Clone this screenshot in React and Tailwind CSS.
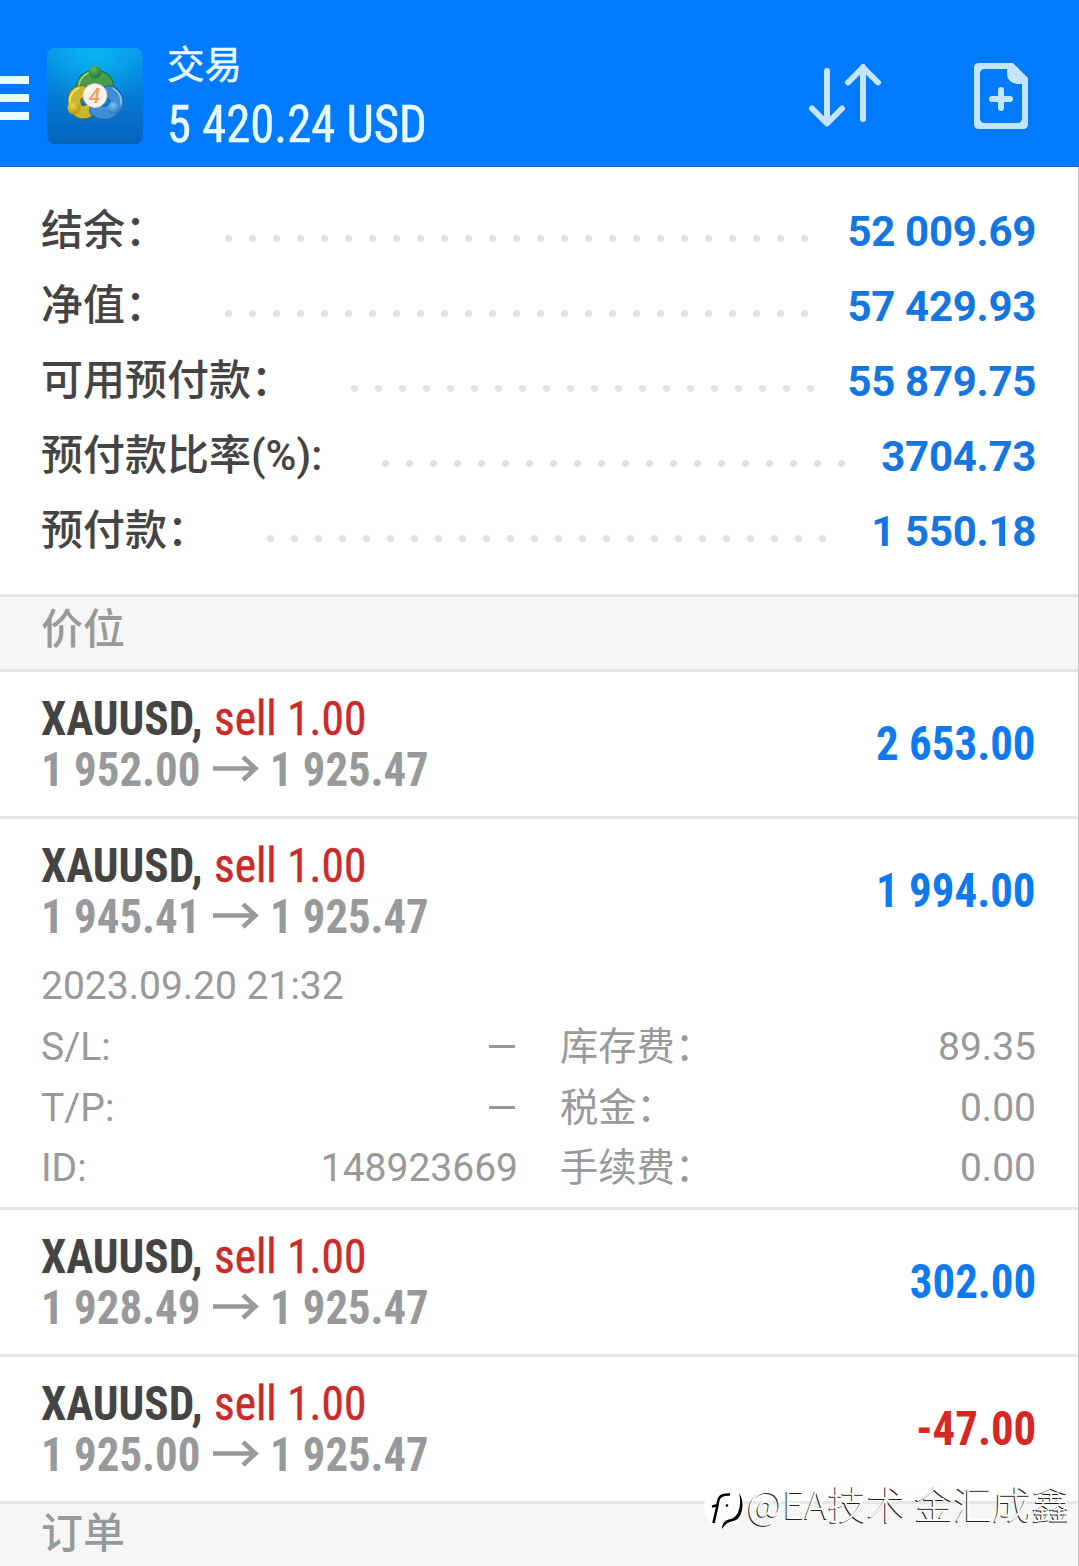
const summary = [
  { label: '结余：', width: 'w-[184px]', dots: 25, value: '52 009.69' },
  { label: '净值：', width: 'w-[184px]', dots: 25, value: '57 429.93' },
  { label: '可用预付款：', width: 'w-[310px]', dots: 20, value: '55 879.75' },
  { label: '预付款比率(%):', width: 'w-[341px]', dots: 20, value: '3704.73' },
  { label: '预付款：', width: 'w-[226px]', dots: 24, value: '1 550.18' },
];

const positions = [
  { open: '1 952.00', profit: '2 653.00' },
  {
    open: '1 945.41',
    profit: '1 994.00',
    time: '2023.09.20 21:32',
    details: [
      ['S/L:', '–', '库存费：', '89.35'],
      ['T/P:', '–', '税金：', '0.00'],
      ['ID:', '148923669', '手续费：', '0.00'],
    ],
  },
  { open: '1 928.49', profit: '302.00' },
  { open: '1 925.00', profit: '-47.00', loss: true },
];

function AppLogo() {
  return (
    <svg className="h-24 w-24 shrink-0" viewBox="0 0 96 96">
      <defs>
        <linearGradient id="bg" x1="0" y1="0" x2="0" y2="1">
          <stop offset="0" stopColor="#0a9ae8" />
          <stop offset="0.5" stopColor="#057cd6" />
          <stop offset="1" stopColor="#0562bc" />
        </linearGradient>
        <radialGradient id="glow" cx="0.5" cy="0.05" r="0.55">
          <stop offset="0" stopColor="#08bcf6" stopOpacity="0.8" />
          <stop offset="1" stopColor="#08bcf6" stopOpacity="0" />
        </radialGradient>
        <radialGradient id="green" cx="0.4" cy="0.3" r="0.7">
          <stop offset="0" stopColor="#62b866" />
          <stop offset="1" stopColor="#1b7a33" />
        </radialGradient>
        <radialGradient id="yellow" cx="0.4" cy="0.3" r="0.7">
          <stop offset="0" stopColor="#ead83c" />
          <stop offset="1" stopColor="#b09416" />
        </radialGradient>
        <radialGradient id="sky" cx="0.4" cy="0.3" r="0.7">
          <stop offset="0" stopColor="#7cc2f4" />
          <stop offset="1" stopColor="#1f74c4" />
        </radialGradient>
      </defs>
      <rect width="96" height="96" rx="8" fill="url(#bg)" />
      <rect width="96" height="96" rx="8" fill="url(#glow)" />
      <g fill="none" strokeLinecap="round">
        <path d="M36 44 C34 33 40 29 48 29 C57 29 62 34 60 45" stroke="#24683a" strokeWidth="14" />
        <path d="M36 44 C34 33 40 29 48 29 C57 29 62 34 60 45" stroke="#4a9e4a" strokeWidth="12" />
        <path d="M32 42 C31 33 36 26 44 24" stroke="#9ad08a" strokeWidth="1.5" />
        <path d="M35 44 C28 44 26 51 28 58 C31 65 37 66 43 62" stroke="#6a6c20" strokeWidth="14" />
        <path d="M35 44 C28 44 26 51 28 58 C31 65 37 66 43 62" stroke="#c9b72e" strokeWidth="12" />
        <path d="M32 40 C26 42 22 49 23 54" stroke="#efe682" strokeWidth="1.5" />
        <path d="M62 44 C69 47 71 53 69 58 C65 65 56 67 49 62" stroke="#1a5fa6" strokeWidth="14" />
        <path d="M62 44 C69 47 71 53 69 58 C65 65 56 67 49 62" stroke="#3f8fd6" strokeWidth="12" />
        <path d="M66 40 C72 44 75 50 74 56" stroke="#91cdf7" strokeWidth="1.5" />
      </g>
      <circle cx="48" cy="24" r="6.5" fill="url(#green)" />
      <circle cx="27" cy="60" r="6.5" fill="url(#yellow)" />
      <circle cx="67" cy="60" r="6.5" fill="url(#sky)" />
      <circle cx="48" cy="47.500" r="12" fill="#faf4f0" stroke="#cfc9b8" strokeWidth="0.8" />
      <text x="47.500" y="55" textAnchor="middle" fontFamily="Roboto" fontStyle="italic" fontWeight="500" fontSize="21" fill="#f2a060">4</text>
    </svg>
  );
}

function Header() {
  return (
    <header className="flex h-[167px] w-[1079px] items-center border-b border-[#1668c4] bg-[#007aff] pt-[25px]">
      <div className="mt-1 flex w-[29px] flex-col gap-2.5">
        <span className="h-2 bg-[#e8fbff]" />
        <span className="h-2 bg-[#e8fbff]" />
        <span className="h-2 bg-[#e8fbff]" />
      </div>
      <div className="ml-[18px]"><AppLogo /></div>
      <div className="ml-6 text-[#e8fbff] [-webkit-text-stroke:0.5px_#e8fbff]">
        <div className="font-['Roboto','Noto_Sans_CJK_SC',sans-serif] text-[37.5px] leading-[56px]">交易</div>
        <div className="origin-left scale-x-[0.955] pt-px font-['Roboto_Condensed',Roboto,sans-serif] text-[51px] leading-[61px] whitespace-nowrap">5 420.24 USD</div>
      </div>
      <svg className="ml-auto h-[66px] w-[76px]" viewBox="0 0 76 66" fill="none" stroke="#c4e4ff" strokeWidth="6" strokeLinecap="round" strokeLinejoin="round">
        <path d="M21 8V60M6 45.500L21 60.500L36 45.500" />
        <path d="M57 56V4M42 19.500L57 4.500L72 19.500" />
      </svg>
      <svg className="mr-[50px] ml-[91px] h-[68px] w-[56px]" viewBox="0 0 56 68">
        <path fill="#c4e4ff" fillRule="evenodd" d="M6 1H40L55 16V62Q55 67 50 67H6Q1 67 1 62V6Q1 1 6 1ZM12 7Q7 7 7 12V56Q7 61 12 61H44Q49 61 49 56V22H44Q34 20 34 12V7Z" />
        <path d="M28 28V46M19 37H37" stroke="#c4e4ff" strokeWidth="6" strokeLinecap="round" />
      </svg>
    </header>
  );
}

function Summary() {
  return (
    <section className="h-[427px] pt-[27px] pr-[42px] pl-[41px]">
      {summary.map((row) => (
        <div key={row.label} className="flex h-[75px] items-center">
          <div className={"shrink-0 whitespace-nowrap font-['Roboto','Noto_Sans_CJK_SC',sans-serif] text-[42px] leading-[73px] h-[75px] font-medium text-[#444444] " + row.width}>
            {row.label}
          </div>
          <div className="flex gap-[17px] pt-3.5">
            {Array.from({ length: row.dots }, (_, i) => (
              <span key={i} className="h-[7px] w-[7px] rounded-full bg-[#e2e2e2]" />
            ))}
          </div>
          <div className="ml-auto whitespace-nowrap font-['Roboto',sans-serif] text-[42px] leading-[75px] font-bold tracking-[-0.3px] text-[#1476e0]">{row.value}</div>
        </div>
      ))}
    </section>
  );
}

function SectionTitle({ leading = 'leading-[66px]', children }) {
  return (
    <div className={"h-[75px] border-t-[3px] border-[#e6e6e6] bg-[#f6f6f6] pl-[41px] font-['Roboto','Noto_Sans_CJK_SC',sans-serif] text-[42px] font-medium text-[#98999b] " + leading}>
      {children}
    </div>
  );
}

function Position({ item }) {
  return (
    <article className="border-t-[3px] border-[#e6e6e6] pr-[42px] pl-[41px]">
      <div className="flex h-36 items-center justify-between font-['Roboto_Condensed',Roboto,sans-serif] text-[48px]">
        <div className="leading-[51px]">
          <div className="flex h-[51px] whitespace-nowrap">
            <div className="w-[173px]">
              <span className="inline-block origin-left scale-x-[0.94] font-bold text-[#444444]">XAUUSD,</span>
            </div>
            <span className="inline-block origin-left scale-x-[0.945] text-[#cc2a2a] [-webkit-text-stroke:0.5px_#cc2a2a]">sell 1.00</span>
          </div>
          <div className="flex h-[51px] items-center font-bold whitespace-nowrap text-[#98999b]">
            <div className="w-[172px]">
              <span className="inline-block origin-left scale-x-[0.935]">{item.open}</span>
            </div>
            <svg className="mr-[11px] h-7 w-[46px]" viewBox="0 0 46 28" fill="none" stroke="#98999b" strokeWidth="4.500">
              <path d="M0 12.500H43M30 1L42.500 12.500L30 24" />
            </svg>
            <span className="inline-block origin-left scale-x-[0.93]">1 925.47</span>
          </div>
        </div>
        <span className={'inline-block origin-right scale-x-[0.935] font-bold ' + (item.loss ? 'text-[#d62626]' : 'text-[#0d7af0]')}>{item.profit}</span>
      </div>
      {item.details && (
        <div className="-mt-[7px] h-[251px] font-['Roboto','Noto_Sans_CJK_SC',sans-serif] text-[39px] text-[#98999b]">
          <div className="h-[61px] leading-[61px]">{item.time}</div>
          {item.details.map(([a, b, c, d]) => (
            <div key={a} className="flex h-[60.500px] leading-[61px]">
              <span>{a}</span>
              <span className="flex-1" />
              <span className="w-[300px] text-right">{b === '–' ? <i className="mr-[3px] mb-3 inline-block h-[3px] w-[26px] bg-[#98999b]" /> : b}</span>
              <span className="ml-[42px] w-[299px] text-[38.3px] leading-[60px]">{c}</span>
              <span className="w-[177px] text-right">{d}</span>
            </div>
          ))}
        </div>
      )}
    </article>
  );
}

function Watermark() {
  return (
    <div className="absolute top-[1473px] left-[702px] flex items-center text-white">
      <svg className="mt-3 h-[46px] w-[45px]" viewBox="0 0 45 46">
        <circle cx="22" cy="22" r="20" fill="#fff" />
        <path d="M10 21.500L16.500 20M11.500 38L15.500 20.500C16 11.500 19 9 28 9.500" fill="none" stroke="#000" strokeWidth="2.600" />
        <path d="M37 8C43 17 41 30 34 35C30 37 25 36 20 44C20 37 24 35 29 34C37 32 40 19 37 8Z" fill="#000" />
        <circle cx="25" cy="20.500" r="1.300" fill="#000" />
      </svg>
      <span className="whitespace-pre font-['Noto_Sans_CJK_SC',sans-serif] text-[39px] leading-[58px] font-light [text-shadow:-1px_1px_0_#222]">@EA技术 金汇成鑫</span>
    </div>
  );
}

export default function App() {
  return (
    <main className="relative h-[1566px] w-[1079px] overflow-hidden bg-white">
      <div className="border-r border-[#c8c8c8]">
        <Header />
        <Summary />
        <SectionTitle>价位</SectionTitle>
        {positions.map((item) => <Position key={item.open} item={item} />)}
        <SectionTitle leading="leading-[60px]">订单</SectionTitle>
      </div>
      <Watermark />
    </main>
  );
}
